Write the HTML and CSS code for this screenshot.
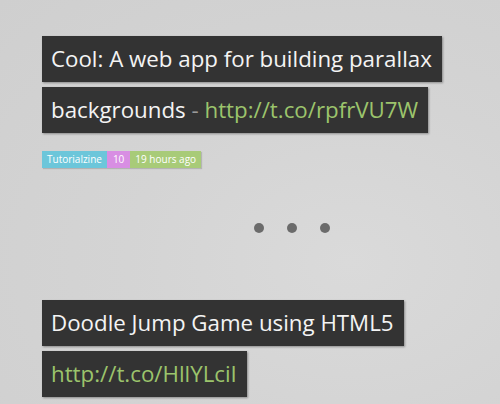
FILE: index.html
```html
<!DOCTYPE html>
<html lang="en">
<head>
  <meta charset="UTF-8">
  <title>Tweets</title>
  <link rel="stylesheet" href="styles.css">
</head>
<body>
  <div id="tweets">
    <!-- First tweet -->
    <div class="tweet">
      <div class="text">
        <span class="line">Cool: A web app for building parallax</span>
        <span class="line">backgrounds <span class="dash">-</span> <a href="#">http://t.co/rpfrVU7W</a></span>
      </div>
      <div class="meta">
        <span class="user">Tutorialzine</span><span class="count">10</span><span class="time">19 hours ago</span>
      </div>
    </div>

    <!-- Loading dots -->
    <div class="loader">
      <span class="dot"></span>
      <span class="dot"></span>
      <span class="dot"></span>
    </div>

    <!-- Second tweet -->
    <div class="tweet">
      <div class="text">
        <span class="line">Doodle Jump Game using HTML5</span>
        <span class="line"><a href="#">http://t.co/HllYLciI</a></span>
      </div>
    </div>
  </div>
</body>
</html>
```

FILE: styles.css
```css
html {
  height: 100%;
}
body {
  font-family: "Open Sans", "Noto Sans", sans-serif;
  background-color: #d4d4d4;
  background-image: radial-gradient(ellipse at 70% 65%, #dadada 0%, #d4d4d4 45%, #cfcfcf 100%);
  min-height: 100%;
  margin: 0;
  padding: 0;
  overflow: hidden;
}
#tweets {
  padding: 36px 0 0 42px;
}
.text {
  display: flex;
  flex-direction: column;
  align-items: flex-start;
  gap: 5px;
}
.line {
  display: block;
  background-color: #333333;
  color: #f4f4f4;
  font-size: 22.3px;
  line-height: 46px;
  padding: 0 10px 0 9px;
  box-shadow: 1px 1px 2px rgba(0, 0, 0, 0.35);
  white-space: nowrap;
}
.line a {
  color: #9cc46c;
  text-decoration: none;
}
.dash {
  color: #9a9a9a;
}
.meta {
  display: flex;
  margin-top: 18px;
  font-size: 10px;
  line-height: 17px;
  color: #ffffff;
  box-shadow: 1px 1px 1px rgba(0, 0, 0, 0.15);
  width: max-content;
}
.meta span {
  padding: 0 5px;
}
.meta .count {
  padding: 0 6px;
}
.user {
  background-color: #6cc6da;
}
.count {
  background-color: #d88ee3;
}
.time {
  background-color: #a8cb78;
}
.loader {
  display: flex;
  gap: 23px;
  margin: 55px 0 0 212px;
  height: 10px;
}
.dot {
  width: 10px;
  height: 10px;
  border-radius: 50%;
  background-color: #6b6b6b;
}
.loader + .tweet {
  margin-top: 67px;
}
```
